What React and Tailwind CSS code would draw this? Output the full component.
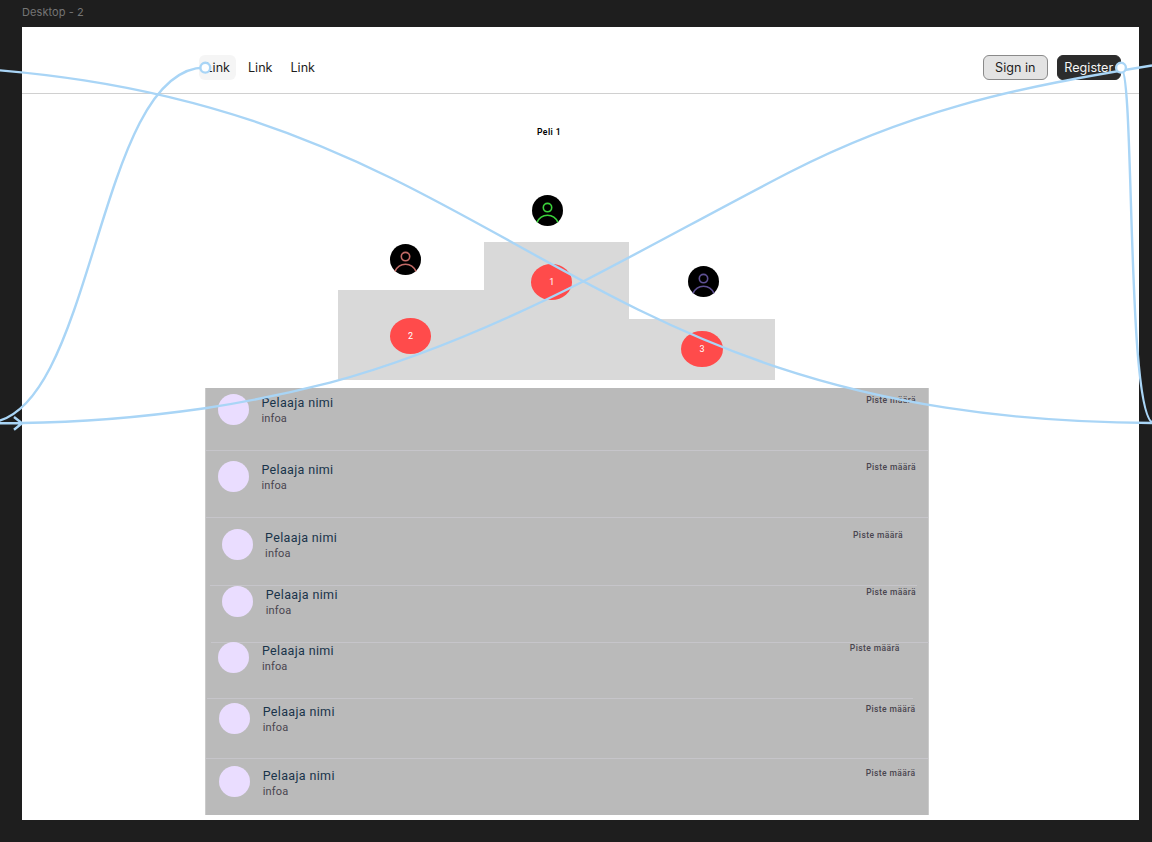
const players = [
  { id: 1, row: "h-[62.5px] pt-[5.5px] pl-[11.7px] pr-[11.7px]", line: "w-full" },
  { id: 2, row: "h-[67px] pt-[10px] pl-[11.7px] pr-[11.7px]", line: "w-full" },
  { id: 3, row: "h-[68px] pt-[11.2px] pl-[15.4px] pr-[24.8px]", line: "ml-[4px] w-[707px]" },
  { id: 4, row: "h-[57px] pt-[0.4px] pl-[16px] pr-[11.7px]", line: "ml-[5px] w-[718px]" },
  { id: 5, row: "h-[56px] -mt-[0.6px] mb-[0.6px] pt-0 pl-[12.2px] pr-[28px]", line: "ml-px w-[706px]" },
  { id: 6, row: "h-[60px] pt-[4px] pl-[13px] pr-[12.2px]", line: "w-full" },
  { id: 7, row: "h-[56px] pt-[7.5px] pl-[13px] pr-[12.2px]", line: "hidden" },
];

function Person({ color, className }) {
  return (
    <svg viewBox="0 0 31 31" className={`h-[31px] w-[31px] shrink-0 ${className}`}>
      <circle cx="15.5" cy="15.5" r="15.5" fill="#000" />
      <g fill="none" stroke={color} strokeWidth="1.6">
        <circle cx="15.5" cy="12.6" r="4.2" />
        <path d="M5 27.4C7 22.8 11 20.2 15.5 20.2S24 22.8 26 27.4" />
      </g>
    </svg>
  );
}

function Place({ n, color, avatar, block, badge }) {
  return (
    <div className="flex w-[145.7px] flex-col">
      <Person color={color} className={avatar} />
      <div className={`bg-[#d9d9d9] ${block}`}>
        <div
          className={`flex h-[36px] w-[41.4px] items-center justify-center rounded-[50%] bg-[#ff4b4b] pt-px text-[9px] text-white ${badge}`}
        >
          {n}
        </div>
      </div>
    </div>
  );
}

function Player({ row, line }) {
  return (
    <li className="flex flex-col">
      <div className={`flex items-start ${row}`}>
        <div className="h-[31px] w-[31px] shrink-0 rounded-full bg-[#eaddff]" />
        <div className="ml-[12.5px] flex grow flex-col pt-[0.5px]">
          <span className="text-[12.5px] leading-[17px] tracking-[0.35px] text-[#19344a]">Pelaaja nimi</span>
          <span className="text-[11px] leading-[15px] tracking-[0.15px] text-[#49454f]">infoa</span>
        </div>
        <span className="pt-[0.5px] text-[8.5px] leading-[13px] font-medium tracking-[0.4px] text-[#49454f]">
          Piste määrä
        </span>
      </div>
      <div className={`-mt-px h-px bg-[#c6c5ca] ${line}`} />
    </li>
  );
}

export default function App() {
  return (
    <div className="relative flex h-[842px] w-[1152px] flex-col overflow-hidden bg-[#1e1e1e] pl-[22px] font-['Roboto',sans-serif]">
      <div className="h-[26.5px] pt-[5px] font-['Inter',sans-serif] text-[11px] leading-[15px] tracking-[0.08px] text-[#757575]">
        Desktop - 2
      </div>
      <main className="flex h-[793.9px] w-[1116.5px] flex-col bg-white">
        <header className="flex h-[67.5px] items-start justify-between border-b border-[#d0d0d0] pt-[28.5px] pr-[17.5px] pl-[177px] font-['Inter',sans-serif] text-[12.6px] text-[#1e1e1e]">
          <nav className="flex gap-[6px]">
            {[1, 2, 3].map((n) => (
              <a
                key={n}
                className={`flex h-[25px] w-[36.5px] items-center justify-center rounded-[6px] pt-px pl-px ${n === 1 ? "bg-[#f5f5f5]" : ""}`}
              >
                Link
              </a>
            ))}
          </nav>
          <div className="flex gap-[9px]">
            <button className="h-[25px] w-[64.5px] rounded-[6px] border border-[#8a8a8a] bg-[#e3e3e3] pt-px">
              Sign in
            </button>
            <button className="h-[25px] w-[64.5px] rounded-[6px] border border-[#2c2c2c] bg-[#2c2c2c] pt-px text-[#f5f5f5]">
              Register
            </button>
          </div>
        </header>

        <h1 className="mt-[32px] ml-[515px] text-[8.6px] leading-[12px] font-semibold tracking-[0.4px] text-black">
          Peli 1
        </h1>

        <section className="ml-[316px] flex h-[241.5px] items-end">
          <Place n={2} color="#c26a66" avatar="ml-[51.6px] mb-[15px]" block="h-[89.5px] pt-[28px]" badge="ml-[51.8px]" />
          <Place n={1} color="#3bd23b" avatar="ml-[48.1px] mb-[16.5px]" block="h-[137.5px] pt-[22px]" badge="ml-[47.3px]" />
          <Place n={3} color="#5e5093" avatar="ml-[59px] mb-[22px]" block="h-[60.5px] pt-[12px]" badge="ml-[52px]" />
        </section>

        <ul className="mt-[8.5px] ml-[183.2px] h-[427px] w-[723.5px] border-x border-[#cbcbcb] bg-[#bababa]">
          {players.map((p) => (
            <Player key={p.id} row={p.row} line={p.line} />
          ))}
        </ul>
      </main>

      <svg
        className="pointer-events-none absolute inset-0"
        width="1152"
        height="842"
        viewBox="0 0 1152 842"
        fill="none"
        stroke="#a9d5f6"
        strokeWidth="2.4"
      >
        <path d="M-130 65C515 65 515 423 1160 423" />
        <path d="M22 423C83 422.5 144 417 205 408.3C247 401.8 288 393.5 330 382.7C414 360 499 324 583 281.5C652 246 721 207.5 790 172C847 142.7 903 121.5 960 105.3C1024 87 1088 76 1152 65.5" />
        <path d="M205 67.5C95 67.5 95 423-15 423" />
        <path d="M1121 68C1135 68 1126 423 1154 423" />
        <path d="M0 423.2H22M14 417l8 6.2-8 6.5" />
        <circle cx="205.3" cy="67.7" r="4.9" fill="#fff" />
        <circle cx="1121" cy="67.7" r="4.9" fill="#fff" />
      </svg>
    </div>
  );
}
